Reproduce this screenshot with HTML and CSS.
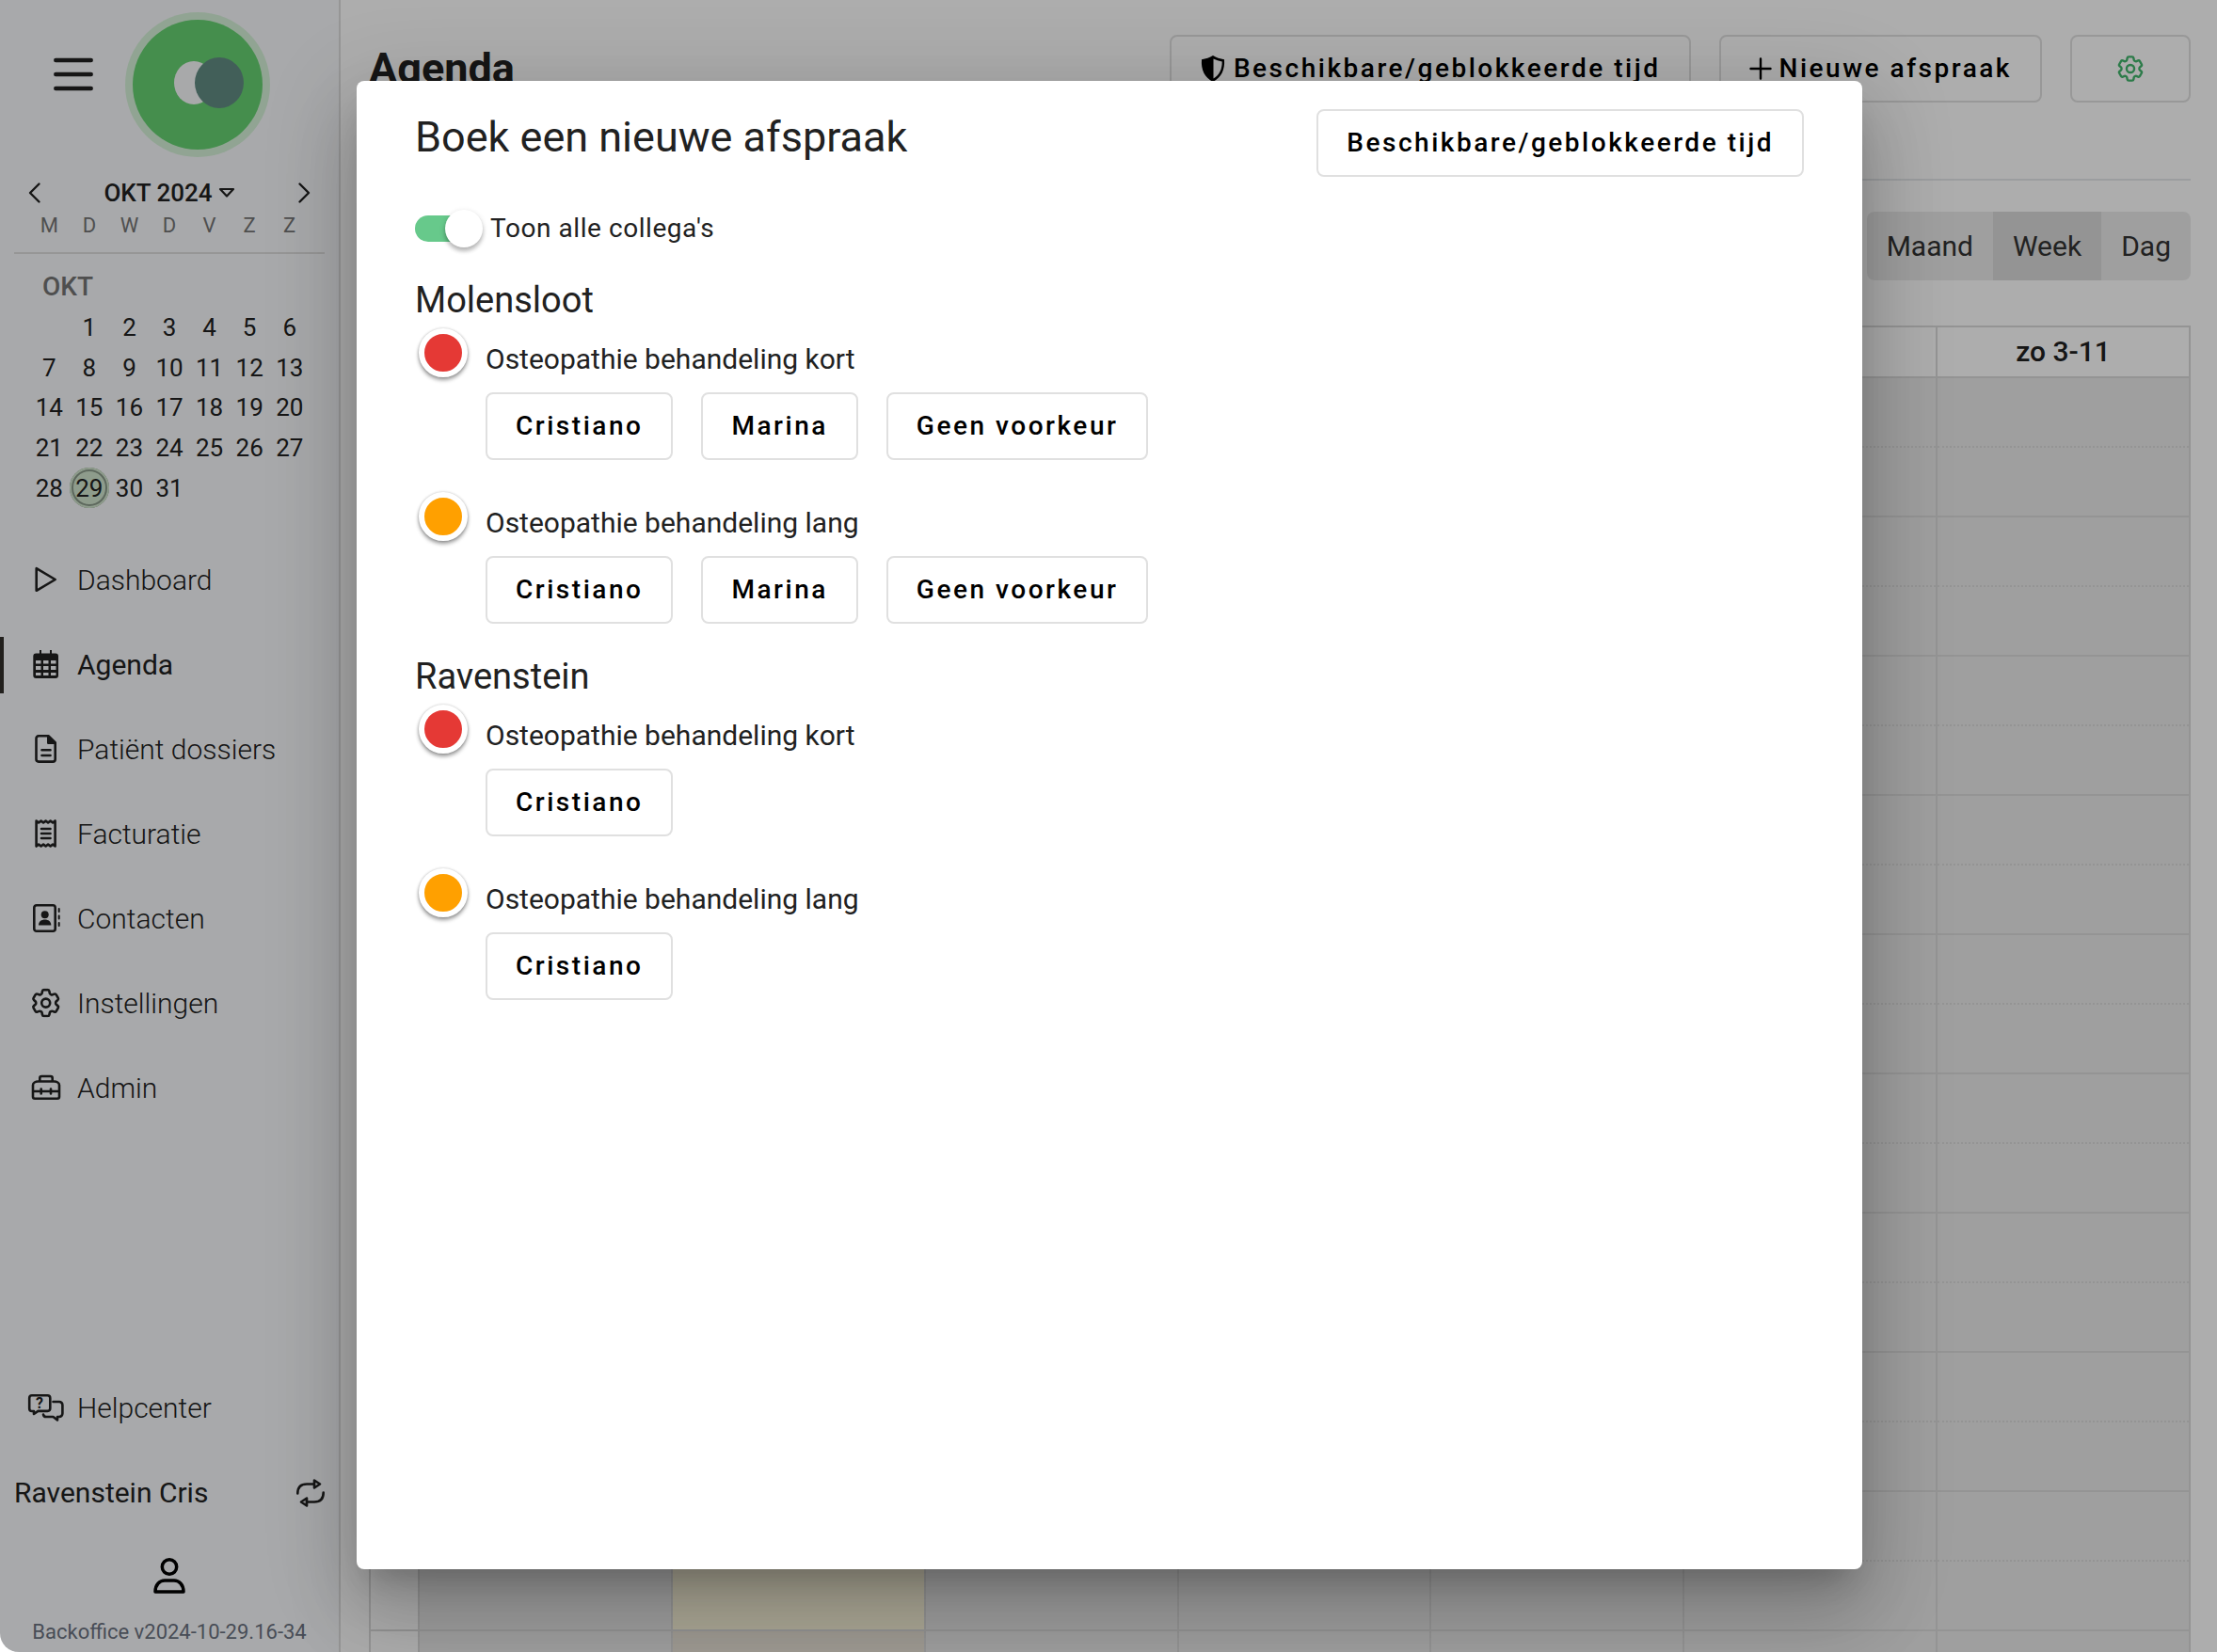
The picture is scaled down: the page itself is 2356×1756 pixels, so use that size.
FILE: index.html
```html
<!DOCTYPE html>
<html lang="nl">
<head>
    <meta charset="UTF-8">
    <title>Agenda</title>
    <link rel="stylesheet" href="styles.css">
</head>
<body>
    <svg width="0" height="0" class="defs">
        <symbol id="gear" viewBox="2 2 20 20">
            <path d="M9.594 3.94c.09-.542.56-.94 1.11-.94h2.593c.55 0 1.02.398 1.11.94l.213 1.281c.063.374.313.686.645.87.074.04.147.083.22.127.325.196.72.257 1.075.124l1.217-.456a1.125 1.125 0 0 1 1.37.49l1.296 2.247a1.125 1.125 0 0 1-.26 1.431l-1.003.827c-.293.241-.438.613-.43.992a7.723 7.723 0 0 1 0 .255c-.008.378.137.75.43.991l1.004.827c.424.35.534.955.26 1.43l-1.298 2.247a1.125 1.125 0 0 1-1.369.491l-1.217-.456c-.355-.133-.75-.072-1.076.124a6.47 6.47 0 0 1-.22.128c-.331.183-.581.495-.644.869l-.213 1.281c-.09.543-.56.94-1.11.94h-2.594c-.55 0-1.019-.398-1.11-.94l-.213-1.281c-.062-.374-.312-.686-.644-.87a6.52 6.52 0 0 1-.22-.127c-.325-.196-.72-.257-1.076-.124l-1.217.456a1.125 1.125 0 0 1-1.369-.49l-1.297-2.247a1.125 1.125 0 0 1 .26-1.431l1.004-.827c.292-.24.437-.613.43-.991a6.932 6.932 0 0 1 0-.255c.007-.38-.138-.751-.43-.992l-1.004-.827a1.125 1.125 0 0 1-.26-1.43l1.297-2.247a1.125 1.125 0 0 1 1.37-.491l1.216.456c.356.133.751.072 1.076-.124.072-.044.146-.086.22-.128.332-.183.582-.495.644-.869l.214-1.28Z"/>
            <circle cx="12" cy="12" r="2.9"/>
        </symbol>
    </svg>

    <div class="app">
        <aside class="sidebar">
            <div class="brand">
                <button class="icon-btn" aria-label="Menu">
                    <svg class="line" width="42" height="36" viewBox="0 0 42 36" stroke-width="4.5"><path d="M2.3 3h37.4M2.3 18h37.4M2.3 33h37.4"/></svg>
                </button>
                <svg width="154" height="154" viewBox="0 0 154 154">
                    <circle cx="77" cy="77" r="77" fill="#d6f2d9"/>
                    <circle cx="77" cy="77" r="69" fill="#66d172"/>
                    <ellipse cx="73" cy="75" rx="21" ry="23" fill="#f8f9fb"/>
                    <ellipse cx="100" cy="75" rx="26" ry="27" fill="#628d84"/>
                </svg>
            </div>

            <div class="mini-cal">
                <div class="mini-head">
                    <button class="icon-btn" aria-label="Vorige maand">
                        <svg class="line" width="13" height="22" viewBox="0 0 13 22" stroke-width="2.4"><path d="M11.5 1.5L2 11l9.500 9.500"/></svg>
                    </button>
                    <button class="mini-title">OKT 2024
                        <svg class="line" width="18" height="12" viewBox="0 0 18 12" stroke-width="2.2"><path d="M2 2h14L9 9.500Z"/></svg>
                    </button>
                    <button class="icon-btn" aria-label="Volgende maand">
                        <svg class="line" width="13" height="22" viewBox="0 0 13 22" stroke-width="2.4"><path d="M1.500 1.500L11 11l-9.500 9.500"/></svg>
                    </button>
                </div>
                <div class="mini-week">
                    <span>M</span><span>D</span><span>W</span><span>D</span><span>V</span><span>Z</span><span>Z</span>
                </div>
                <div class="mini-month">OKT</div>
                <div class="mini-days" id="days"></div>
            </div>

            <nav class="nav">
                <a href="#">
                    <svg class="line" viewBox="0 0 34 34"><path d="M6.700 4.200v23.600l20-11.800z"/></svg>
                    Dashboard
                </a>
                <a href="#" class="active">
                    <svg viewBox="0 0 34 34"><path fill-rule="evenodd" d="M10 1h2v3.500h9V1h2v3.500h4a3 3 0 0 1 3 3V28a3 3 0 0 1-3 3H6.300a3 3 0 0 1-3-3V7.500a3 3 0 0 1 3-3H10zM6 12v3.500h5.500V12zm8 0v3.500h5.500V12zm8 0v3.500h5.500V12zM6 18v4h5.500v-4zm8 0v4h5.500v-4zm8 0v4h5.500v-4zM6 25v3h5.500v-3zm8 0v3h5.500v-3zm8 0v3h5.500v-3z"/></svg>
                    Agenda
                </a>
                <a href="#">
                    <svg class="line" viewBox="0 0 34 34"><path d="M9 2.300h10.500l7.200 7.200V27a2.600 2.600 0 0 1-2.600 2.600H9A2.600 2.600 0 0 1 6.500 27V5A2.600 2.600 0 0 1 9 2.300z"/><path d="M19.300 2.500v7.200h7.200z" fill="#212121"/><path d="M12.500 17.300h9M12.500 23h9"/></svg>
                    Patiënt dossiers
                </a>
                <a href="#">
                    <svg class="line" viewBox="0 0 34 34"><path d="M6.600 2.500l2.500 2 2.500-2 2.500 2 2.500-2 2.500 2 2.500-2 2.500 2 2.500-2v27l-2.500-2-2.500 2-2.500-2-2.500 2-2.500-2-2.500 2-2.500-2-2.500 2z"/><path d="M12 11h9.500M12 16h9.500M12 21h9.500"/></svg>
                    Facturatie
                </a>
                <a href="#">
                    <svg class="line" viewBox="0 0 34 34"><rect x="4.300" y="2.300" width="22.400" height="27.400" rx="2.500"/><circle cx="15.700" cy="12.300" r="4" fill="#212121" stroke="none"/><path d="M9 23.500c0-4 3-6 6.700-6s6.600 2 6.600 6z" fill="#212121" stroke="none"/><path d="M30.700 6v3M30.700 13.500v3M30.700 21v3" stroke-width="2"/></svg>
                    Contacten
                </a>
                <a href="#">
                    <svg class="line" viewBox="0 0 34 34"><use href="#gear" x="1.200" y="0.600" width="31" height="31" stroke-width="1.700"/></svg>
                    Instellingen
                </a>
                <a href="#">
                    <svg class="line" viewBox="0 0 34 34"><path d="M3 13.500c0-2.500 3-4 5.500-4h17c2.500 0 5.500 1.500 5.500 4v12.200a2 2 0 0 1-2 2H5a2 2 0 0 1-2-2zM10.300 9V6a2 2 0 0 1 2-2h9.400a2 2 0 0 1 2 2v3M3 20h28M11.700 17.500v5M22 17.500v5"/></svg>
                    Admin
                </a>
            </nav>

            <div class="side-foot">
                <nav class="nav">
                    <a href="#">
                        <svg class="line" viewBox="0 0 34 34"><path d="M2 3.300h16.500a2.800 2.800 0 0 1 2.800 2.800v11a2.800 2.800 0 0 1-2.800 2.800H8.500L4 23v-3H2a2.800 2.800 0 0 1-2.800-2.800V6A2.800 2.800 0 0 1 2 3.300z"/><path d="M24.500 10h6.500a3.400 3.400 0 0 1 3.400 3.400v9.200a3.400 3.400 0 0 1-3.400 3.400h-2v3.500L24.500 26H17c-1.800 0-2.800-1-3-2.500"/><text x="10" y="17" text-anchor="middle" class="q">?</text></svg>
                        Helpcenter
                    </a>
                </nav>
                <button class="account">
                    Ravenstein Cris
                    <svg class="line" width="30" height="30" viewBox="0 0 30 30" stroke-width="2.600"><g id="swap"><path d="M1.300 15.500C1.300 9 5 5.500 11 5.500h8"/><path d="M19 1.500v8l6-4z"/></g><use href="#swap" transform="rotate(180 15 15)"/></svg>
                </button>
                <button class="icon-btn profile" aria-label="Profiel">
                    <svg class="line dark" width="34" height="38" viewBox="0 0 34 38" stroke-width="3.500"><circle cx="17" cy="9.500" r="7.700"/><path d="M2 36c0-8 5-12 10-12h10c5 0 10 4 10 12z"/></svg>
                </button>
                <div class="version">Backoffice v2024-10-29.16-34</div>
            </div>
        </aside>

        <main class="main">
            <header class="page-head">
                <h1>Agenda</h1>
                <button class="btn">
                    <svg width="28" height="28" viewBox="0 0 28 28"><path fill-rule="evenodd" d="M14 0c3.500 2 7.500 3.600 12 4.300.8 10.700-3 19.200-12 23.700C5 23.500 1.200 15 2 4.300 6.500 3.600 10.500 2 14 0zm.500 3.500v21c6.500-3.700 9.300-10 9.200-17.900-3.300-.7-6.400-1.700-9.200-3.100z"/></svg>
                    Beschikbare/geblokkeerde tijd
                </button>
                <button class="btn">
                    <svg class="line dark" width="24" height="24" viewBox="0 0 24 24" stroke-width="2.400"><path d="M12 1.500v21M1.500 12h21"/></svg>
                    Nieuwe afspraak
                </button>
                <button class="btn" aria-label="Instellingen">
                    <svg class="line green" width="28" height="28" stroke-width="1.700"><use href="#gear"/></svg>
                </button>
            </header>

            <div class="views">
                <button>Maand</button><button class="selected">Week</button><button>Dag</button>
            </div>

            <table class="week">
                <thead>
                    <tr><th class="axis"></th><th></th><th></th><th></th><th></th><th></th><th></th><th>zo 3-11</th></tr>
                </thead>
                <tbody id="slots"></tbody>
            </table>
        </main>

        <div class="overlay">
            <section class="modal" role="dialog" aria-labelledby="modal-title">
                <header class="modal-head">
                    <h2 id="modal-title">Boek een nieuwe afspraak</h2>
                    <button class="btn">Beschikbare/geblokkeerde tijd</button>
                </header>

                <label class="switch"><input type="checkbox" checked> Toon alle collega's</label>

                <h3>Molensloot</h3>
                <div class="service">
                    <span class="dot red"></span>
                    <h4>Osteopathie behandeling kort</h4>
                    <div class="staff">
                        <button class="btn">Cristiano</button>
                        <button class="btn">Marina</button>
                        <button class="btn">Geen voorkeur</button>
                    </div>
                </div>
                <div class="service">
                    <span class="dot orange"></span>
                    <h4>Osteopathie behandeling lang</h4>
                    <div class="staff">
                        <button class="btn">Cristiano</button>
                        <button class="btn">Marina</button>
                        <button class="btn">Geen voorkeur</button>
                    </div>
                </div>

                <h3>Ravenstein</h3>
                <div class="service">
                    <span class="dot red"></span>
                    <h4>Osteopathie behandeling kort</h4>
                    <div class="staff">
                        <button class="btn">Cristiano</button>
                    </div>
                </div>
                <div class="service">
                    <span class="dot orange"></span>
                    <h4>Osteopathie behandeling lang</h4>
                    <div class="staff">
                        <button class="btn">Cristiano</button>
                    </div>
                </div>
            </section>
        </div>
    </div>

    <script>
        var today = 29;
        var days = document.getElementById("days");
        for (var d = 1; d <= 31; d++) {
            var day = document.createElement("button");
            day.textContent = d;
            if (d === today) {
                day.className = "today";
            }
            days.appendChild(day);
        }

        // half-hour slots, the second day is today and is open until closingSlot
        var slots = document.getElementById("slots");
        var closingSlot = 18;
        for (var s = 0; s < 20; s++) {
            var row = slots.insertRow();
            row.insertCell().className = "axis";
            for (var c = 0; c < 7; c++) {
                var cell = row.insertCell();
                cell.className = c === 1 ? "now" : "closed";
                if (c === 1 && s >= closingSlot) {
                    cell.className = "now closed";
                }
            }
        }
    </script>
</body>
</html>
```

FILE: styles.css
```css
* {
    box-sizing: border-box;
}
body {
    margin: 0;
    background: #fff;
    color: #212121;
    font: 400 30px/40px Roboto, sans-serif;
}
h1, h2, h3, h4 {
    margin: 0;
    font-weight: 400;
}
button {
    margin: 0;
    padding: 0;
    border: 0;
    background: none;
    color: inherit;
    font: inherit;
    cursor: pointer;
}
svg {
    display: block;
    flex: none;
    overflow: visible;
}
.defs {
    position: absolute;
}
.line {
    fill: none;
    stroke: #212121;
    stroke-linecap: round;
    stroke-linejoin: round;
}
    .line.dark {
        stroke: #000;
    }
    .line.green {
        stroke: #42b66c;
    }

.app {
    position: relative;
    display: flex;
    height: 100vh;
    overflow: hidden;
    background: #fff;
    border-bottom-left-radius: 20px;
}

/* sidebar */
.sidebar {
    display: flex;
    flex-direction: column;
    flex: none;
    width: 362px;
    padding: 13px 0 7px;
    background: #f8fafc;
    border-right: 2px solid #ddd;
}
.brand {
    display: flex;
    align-items: center;
    gap: 34px;
    padding-left: 57px;
}
    .brand .icon-btn {
        padding-bottom: 22px;
    }

.mini-cal {
    padding: 24px 15px 0;
}
    .mini-head {
        display: flex;
        align-items: center;
        justify-content: space-between;
        padding: 0 15px;
        line-height: 28px;
    }
    .mini-title {
        display: flex;
        align-items: center;
        gap: 6px;
        font-size: 26px;
        font-weight: 500;
    }
    .mini-week,
    .mini-days {
        display: grid;
        grid-template-columns: repeat(7, 1fr);
        padding: 0 16px;
        text-align: center;
    }
    .mini-week {
        padding-top: 7px;
        padding-bottom: 14px;
        border-bottom: 2px solid #ddd;
        color: #757575;
        font-size: 22px;
        line-height: 28px;
    }
    .mini-month {
        padding: 17px 30px 4px;
        color: #757575;
        font-size: 28px;
        font-weight: 500;
        line-height: 36px;
    }
    .mini-days button {
        aspect-ratio: 1;
        border-radius: 50%;
        font-size: 26px;
        line-height: 28px;
    }
    .mini-days button:first-child {
        grid-column-start: 2;
    }
    .mini-days .today {
        background: #d2e6cf;
        box-shadow: inset 0 0 0 2px #d2e6cf, inset 0 0 0 4px #8a9a8a;
    }

.nav {
    display: flex;
    flex-direction: column;
    gap: 30px;
}
    .mini-cal + .nav {
        padding-top: 47px;
    }
    .nav a {
        display: flex;
        align-items: center;
        gap: 16px;
        height: 60px;
        padding-left: 28px;
        border-left: 4px solid transparent;
        color: #212121;
        font-weight: 300;
        text-decoration: none;
    }
    .nav a.active {
        border-color: #33302c;
        font-weight: 400;
    }
    .nav svg {
        width: 34px;
        height: 34px;
        fill: #212121;
    }
    .nav .line {
        fill: none;
        stroke-width: 2.6px;
    }
    .nav .q {
        fill: #212121;
        stroke: none;
        font-size: 16px;
        font-weight: 700;
    }

.side-foot {
    display: flex;
    flex-direction: column;
    margin-top: auto;
}
    .account {
        display: flex;
        align-items: center;
        justify-content: space-between;
        height: 60px;
        margin-top: 30px;
        padding: 0 15px;
    }
    .profile {
        align-self: center;
        margin-top: 39px;
    }
    .version {
        padding-top: 27px;
        color: #6b7280;
        font-size: 22px;
        line-height: 28px;
        text-align: center;
    }

/* agenda */
.main {
    flex: 1;
    min-width: 0;
    padding: 37px 28px 0 30px;
    overflow: hidden;
}
.page-head {
    display: flex;
    align-items: center;
    gap: 30px;
    padding-bottom: 81px;
    border-bottom: 2px solid #e5e7eb;
}
    .page-head h1 {
        margin-right: auto;
        font-size: 45px;
        font-weight: 700;
        line-height: 60px;
    }
.btn {
    display: inline-flex;
    align-items: center;
    justify-content: center;
    gap: 8px;
    min-width: 128px;
    height: 72px;
    padding: 0 30px;
    border: 2px solid #e0e0e0;
    border-radius: 8px;
    color: #000;
    font-size: 28px;
    font-weight: 500;
    letter-spacing: 0.09em;
    white-space: nowrap;
}

.views {
    display: flex;
    justify-content: flex-end;
    padding: 33px 0 48px;
}
    .views button {
        height: 73px;
        padding: 0 21px;
        background: #ebebeb;
        color: #333;
    }
    .views button:first-child {
        border-radius: 8px 0 0 8px;
    }
    .views button:last-child {
        border-radius: 0 8px 8px 0;
    }
    .views .selected {
        background: #dbdbdb;
    }

.week {
    width: 100%;
    border-collapse: collapse;
    table-layout: fixed;
}
    .week th,
    .week td {
        height: 74px;
        padding: 0;
        border: 2px solid #dadada;
    }
    .week th {
        height: 54px;
        font-size: 30px;
        font-weight: 500;
        line-height: 40px;
    }
    .week .axis {
        width: 52px;
    }
    .week tr:nth-child(odd) td {
        border-bottom-style: dotted;
    }
    .week tr:nth-child(even) td {
        border-top-style: dotted;
    }
    .week .closed {
        background: #ebebeb;
    }
    .week .now {
        background: #fffadf;
    }
    .week .now.closed {
        background: #ebe5d9;
    }

/* booking dialog */
.overlay {
    position: absolute;
    inset: 0;
    display: flex;
    justify-content: center;
    padding: 86px 0 88px 2px;
    background: rgba(0, 0, 0, 0.32);
}
.modal {
    width: 90%;
    max-width: 1600px;
    padding: 30px 62px;
    overflow: auto;
    background: #fff;
    border-radius: 8px;
    box-shadow: 0 22px 30px -14px rgba(0, 0, 0, 0.2), 0 48px 76px 6px rgba(0, 0, 0, 0.14), 0 18px 92px 16px rgba(0, 0, 0, 0.12);
}
    .modal-head {
        display: flex;
        align-items: flex-start;
        justify-content: space-between;
    }
    .modal-head h2 {
        font-size: 45px;
        line-height: 60px;
    }
    .modal h3 {
        font-size: 38px;
        line-height: 50px;
    }
    .modal .service + h3 {
        margin-top: 2px;
    }

.switch {
    display: flex;
    align-items: center;
    gap: 16px;
    height: 40px;
    margin: 35px 0 31px;
    font-size: 28px;
    letter-spacing: 0.02em;
}
    .switch input {
        position: relative;
        appearance: none;
        width: 64px;
        height: 28px;
        margin: 0;
        border-radius: 14px;
        background: #bbb;
    }
    .switch input:checked {
        background: #67c98b;
    }
    .switch input::before {
        content: "";
        position: absolute;
        top: -6px;
        left: -8px;
        width: 40px;
        height: 40px;
        border-radius: 50%;
        background: #fff;
        box-shadow: 0 4px 4px rgba(0, 0, 0, 0.2), 0 2px 6px rgba(0, 0, 0, 0.16);
    }
    .switch input:checked::before {
        left: 32px;
    }

.service {
    display: grid;
    grid-template-columns: 75px 1fr;
    padding: 5px 0 29px;
}
    .dot {
        width: 52px;
        height: 52px;
        margin-left: 4px;
        border: 6px solid #fff;
        border-radius: 50%;
        box-shadow: 0 3px 4px rgba(0, 0, 0, 0.4), 0 0 3px rgba(0, 0, 0, 0.2);
    }
    .dot.red {
        background: #e53935;
    }
    .dot.orange {
        background: #ffa000;
    }
    .service h4 {
        padding-top: 13px;
        font-size: 30px;
        line-height: 40px;
    }
    .staff {
        display: flex;
        flex-wrap: wrap;
        grid-column: 2;
        gap: 30px;
        margin-top: 15px;
    }
```
